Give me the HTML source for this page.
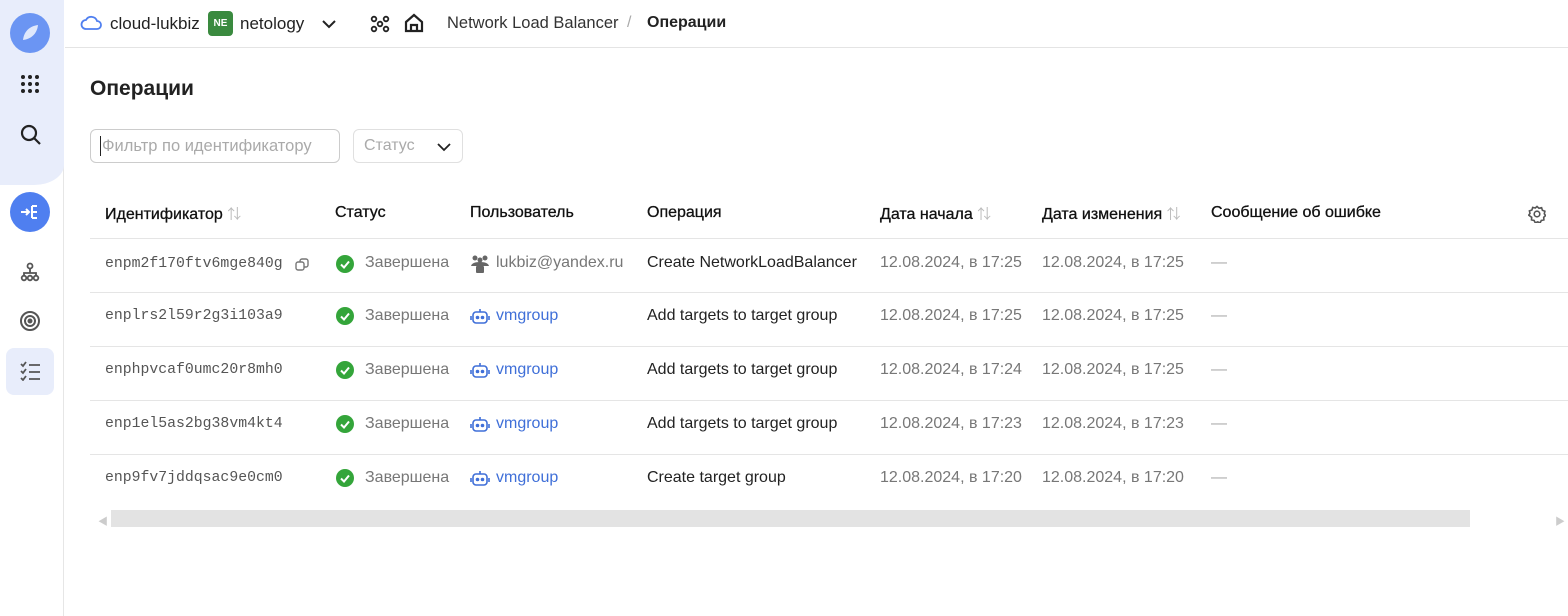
<!DOCTYPE html>
<html><head><meta charset="utf-8"><style>
*{box-sizing:border-box;margin:0;padding:0}
body{width:1568px;height:616px;overflow:hidden;background:#fff;font-family:"Liberation Sans","Noto Sans CJK SC",sans-serif;color:#222;position:relative;font-size:16px}
.a{position:absolute;white-space:nowrap}
.side{position:absolute;left:0;top:0;width:64px;height:616px;border-right:1px solid #e6e6e6;background:#fff}
.hl{position:absolute;left:0;top:0;width:64px;height:185px;background:#e8edfb;border-bottom-right-radius:30px 20px}
.top{position:absolute;left:65px;top:47px;width:1503px;border-top:1px solid #e4e4e4}
.ln{position:absolute;left:90px;width:1478px;border-top:1px solid #e5e5e5}
.id{font-family:"Liberation Mono",monospace;font-size:14.8px;color:#555}
.g{color:#777}
.lnk{color:#3f6fd8}
.h{color:#111;font-size:16px;-webkit-text-stroke:0.3px #111}
.srt{color:#bbb;font-size:14px;-webkit-text-stroke:0}
</style></head><body>
<div class="side"><div class="hl"></div></div>
<svg class="a" style="left:10px;top:13px" width="40" height="40"><circle cx="20" cy="20" r="20" fill="#6b95f3"/><path d="M13 27 C14 18 20 13 28 12 C27 21 21 26 13 27Z" fill="#dfe8fc"/></svg>
<svg class="a" style="left:20px;top:74px" width="20" height="20" fill="#222"><circle cx="3" cy="3" r="2"/><circle cx="10" cy="3" r="2"/><circle cx="17" cy="3" r="2"/><circle cx="3" cy="10" r="2"/><circle cx="10" cy="10" r="2"/><circle cx="17" cy="10" r="2"/><circle cx="3" cy="17" r="2"/><circle cx="10" cy="17" r="2"/><circle cx="17" cy="17" r="2"/></svg>
<svg class="a" style="left:20px;top:124px" width="22" height="22" fill="none" stroke="#222" stroke-width="2.2"><circle cx="9" cy="9" r="7"/><path d="M14 14l6 6"/></svg>
<svg class="a" style="left:10px;top:192px" width="40" height="40"><circle cx="20" cy="20" r="20" fill="#4f7ff0"/><path d="M11 20h8M16 17l3 3-3 3M22 14v12M22 14h5M22 20h5M22 26h5" stroke="#fff" stroke-width="2" fill="none"/></svg>
<svg class="a" style="left:20px;top:262px" width="20" height="20" fill="none" stroke="#555" stroke-width="1.8"><circle cx="10" cy="4" r="2.5"/><path d="M10 7v4M4 14v-3h12v3"/><circle cx="4" cy="16" r="2.3"/><circle cx="10" cy="16" r="2.3"/><circle cx="16" cy="16" r="2.3"/></svg>
<svg class="a" style="left:19px;top:310px" width="22" height="22" fill="none" stroke="#555" stroke-width="2"><circle cx="11" cy="11" r="9"/><circle cx="11" cy="11" r="5"/><circle cx="11" cy="11" r="1.5" fill="#555"/></svg>
<div class="a" style="left:6px;top:348px;width:48px;height:47px;background:#e8edfb;border-radius:8px"></div>
<svg class="a" style="left:20px;top:361px" width="22" height="20" fill="none" stroke="#555" stroke-width="1.8"><path d="M1 3l2 2 3-4M1 10l2 2 3-4M1 17l2 2 3-4M9 4h11M9 11h11M9 18h11"/></svg>
<div class="top"></div>
<svg class="a" style="left:80px;top:14px" width="22" height="18" fill="none" stroke="#4f7ff0" stroke-width="1.8"><path d="M6 15h11a4 4 0 0 0 0-8 6 6 0 0 0-11-1 4.5 4.5 0 0 0 0 9z"/></svg>
<div class="a" style="left:110px;top:14px;font-size:17px">cloud-lukbiz</div>
<div class="a" style="left:208px;top:11px;width:25px;height:25px;background:#3a8a3f;border-radius:4px;color:#fff;font-size:10px;font-weight:bold;text-align:center;line-height:25px">NE</div>
<div class="a" style="left:240px;top:14px;font-size:17px">netology</div>
<svg class="a" style="left:322px;top:19px" width="14" height="10" fill="none" stroke="#222" stroke-width="2"><path d="M1 2l6 6 6-6"/></svg>
<svg class="a" style="left:370px;top:14px" width="20" height="20" fill="none" stroke="#222" stroke-width="1.8"><circle cx="4" cy="5" r="2.3"/><circle cx="16" cy="5" r="2.3"/><circle cx="10" cy="10" r="2.3"/><circle cx="4" cy="15" r="2.3"/><circle cx="16" cy="15" r="2.3"/></svg>
<svg class="a" style="left:404px;top:13px" width="20" height="20" fill="none" stroke="#222" stroke-width="2.2"><path d="M2 9l8-7 8 7v9H2z"/><path d="M7 18v-6h6v6"/></svg>
<div class="a" style="left:447px;top:14px;font-size:16.5px;color:#333">Network Load Balancer</div>
<div class="a" style="left:627px;top:14px;font-size:16px;color:#aaa">/</div>
<div class="a" style="left:647px;top:14px;font-size:16px;font-weight:bold">Операции</div>
<div class="a" style="left:90px;top:77px;font-size:21px;font-weight:bold;color:#222">Операции</div>
<div class="a" style="left:90px;top:129px;width:250px;height:34px;border:1px solid #ccc;border-radius:6px"></div>
<div class="a" style="left:100px;top:136px;width:1px;height:20px;background:#222"></div>
<div class="a" style="left:102px;top:137px;color:#aaa;font-size:16.5px">Фильтр по идентификатору</div>
<div class="a" style="left:353px;top:129px;width:110px;height:34px;border:1px solid #e0e0e0;border-radius:6px"></div>
<div class="a" style="left:364px;top:137px;color:#aaa;font-size:16px">Статус</div>
<svg class="a" style="left:437px;top:142px" width="14" height="10" fill="none" stroke="#222" stroke-width="1.8"><path d="M1 2l6 6 6-6"/></svg>

<div class="a h" style="left:105px;top:204px">Идентификатор <span class="srt">⇅</span></div>
<div class="a h" style="left:335px;top:204px">Статус</div>
<div class="a h" style="left:470px;top:204px">Пользователь</div>
<div class="a h" style="left:647px;top:204px">Операция</div>
<div class="a h" style="left:880px;top:204px">Дата начала <span class="srt">⇅</span></div>
<div class="a h" style="left:1042px;top:204px">Дата изменения <span class="srt">⇅</span></div>
<div class="a h" style="left:1211px;top:204px">Сообщение об ошибке</div>
<svg class="a" style="left:1528px;top:205px" width="18" height="18" fill="none" stroke="#555" stroke-width="1.6"><circle cx="9" cy="9" r="2.8"/><path d="M9 1.5l2 1.8 2.6-.6.8 2.6 2.5.9-.6 2.6 1.3 1.7-1.9 1.8.2 2.6-2.6.6-1.2 2.4-2.4-1-2.4 1-1.2-2.4-2.6-.6.2-2.6L.7 10.2 2 8.5l-.6-2.6 2.5-.9.8-2.6 2.6.6z"/></svg>
<div class="ln" style="top:238px"></div>
<div class="ln" style="top:292px"></div>
<div class="ln" style="top:346px"></div>
<div class="ln" style="top:400px"></div>
<div class="ln" style="top:454px"></div>

<div class="a id" style="left:105px;top:256px">enpm2f170ftv6mge840g</div>
<svg class="a" style="left:295px;top:258px" width="14" height="14" fill="none" stroke="#777" stroke-width="1.4"><rect x="1" y="4" width="8" height="8" rx="2"/><path d="M5 4V3a2 2 0 0 1 2-2h4a2 2 0 0 1 2 2v4a2 2 0 0 1-2 2h-2"/></svg>
<div class="a g" style="left:496px;top:254px">lukbiz@yandex.ru</div>
<svg class="a" style="left:470px;top:254px" width="20" height="20" fill="#666"><circle cx="5" cy="4" r="2.5"/><circle cx="15" cy="4" r="2.5"/><circle cx="10" cy="6" r="2.5"/><path d="M1 12c1-4 7-4 9-4s8 0 9 4z"/><rect x="6" y="12" width="8" height="7" rx="1"/></svg>
<div class="a" style="left:647px;top:254px">Create NetworkLoadBalancer</div>
<div class="a g" style="left:880px;top:254px">12.08.2024, в 17:25</div>
<div class="a g" style="left:1042px;top:254px">12.08.2024, в 17:25</div>

<div class="a id" style="left:105px;top:308px">enplrs2l59r2g3i103a9</div>
<div class="a" style="left:647px;top:307px">Add targets to target group</div>
<div class="a g" style="left:880px;top:307px">12.08.2024, в 17:25</div>
<div class="a g" style="left:1042px;top:307px">12.08.2024, в 17:25</div>

<div class="a id" style="left:105px;top:362px">enphpvcaf0umc20r8mh0</div>
<div class="a" style="left:647px;top:361px">Add targets to target group</div>
<div class="a g" style="left:880px;top:361px">12.08.2024, в 17:24</div>
<div class="a g" style="left:1042px;top:361px">12.08.2024, в 17:25</div>

<div class="a id" style="left:105px;top:416px">enp1el5as2bg38vm4kt4</div>
<div class="a" style="left:647px;top:415px">Add targets to target group</div>
<div class="a g" style="left:880px;top:415px">12.08.2024, в 17:23</div>
<div class="a g" style="left:1042px;top:415px">12.08.2024, в 17:23</div>

<div class="a id" style="left:105px;top:470px">enp9fv7jddqsac9e0cm0</div>
<div class="a" style="left:647px;top:469px">Create target group</div>
<div class="a g" style="left:880px;top:469px">12.08.2024, в 17:20</div>
<div class="a g" style="left:1042px;top:469px">12.08.2024, в 17:20</div>

<svg width="0" height="0" style="position:absolute"><defs>
<g id="ok"><circle cx="9" cy="9" r="9" fill="#34a53a"/><path d="M5 9.5l3 3 5-6" stroke="#fff" stroke-width="2" fill="none"/></g>
<g id="bot" fill="none" stroke="#3f6fd8" stroke-width="1.6"><rect x="3" y="5" width="14" height="11" rx="3"/><path d="M10 5V2M1 9v4M19 9v4"/><circle cx="7.5" cy="10.5" r="1" fill="#3f6fd8"/><circle cx="12.5" cy="10.5" r="1" fill="#3f6fd8"/></g>
</defs></svg>
<svg class="a" style="left:336px;top:255px" width="18" height="18"><use href="#ok"/></svg>
<svg class="a" style="left:336px;top:307px" width="18" height="18"><use href="#ok"/></svg>
<svg class="a" style="left:336px;top:361px" width="18" height="18"><use href="#ok"/></svg>
<svg class="a" style="left:336px;top:415px" width="18" height="18"><use href="#ok"/></svg>
<svg class="a" style="left:336px;top:469px" width="18" height="18"><use href="#ok"/></svg>
<div class="a g" style="left:365px;top:254px">Завершена</div>
<div class="a g" style="left:365px;top:307px">Завершена</div>
<div class="a g" style="left:365px;top:361px">Завершена</div>
<div class="a g" style="left:365px;top:415px">Завершена</div>
<div class="a g" style="left:365px;top:469px">Завершена</div>
<svg class="a" style="left:470px;top:307px" width="20" height="18"><use href="#bot"/></svg>
<svg class="a" style="left:470px;top:361px" width="20" height="18"><use href="#bot"/></svg>
<svg class="a" style="left:470px;top:415px" width="20" height="18"><use href="#bot"/></svg>
<svg class="a" style="left:470px;top:469px" width="20" height="18"><use href="#bot"/></svg>
<div class="a lnk" style="left:496px;top:307px">vmgroup</div>
<div class="a lnk" style="left:496px;top:361px">vmgroup</div>
<div class="a lnk" style="left:496px;top:415px">vmgroup</div>
<div class="a lnk" style="left:496px;top:469px">vmgroup</div>
<div class="a" style="left:1211px;top:254px;color:#aaa">—</div>
<div class="a" style="left:1211px;top:307px;color:#aaa">—</div>
<div class="a" style="left:1211px;top:361px;color:#aaa">—</div>
<div class="a" style="left:1211px;top:415px;color:#aaa">—</div>
<div class="a" style="left:1211px;top:469px;color:#aaa">—</div>

<div class="a" style="left:111px;top:510px;width:1359px;height:17px;background:#e3e3e3"></div>
<div class="a" style="left:98px;top:513px;color:#ccc;font-size:10px">◀</div>
<div class="a" style="left:1555px;top:513px;color:#ccc;font-size:10px">▶</div>
</body></html>
